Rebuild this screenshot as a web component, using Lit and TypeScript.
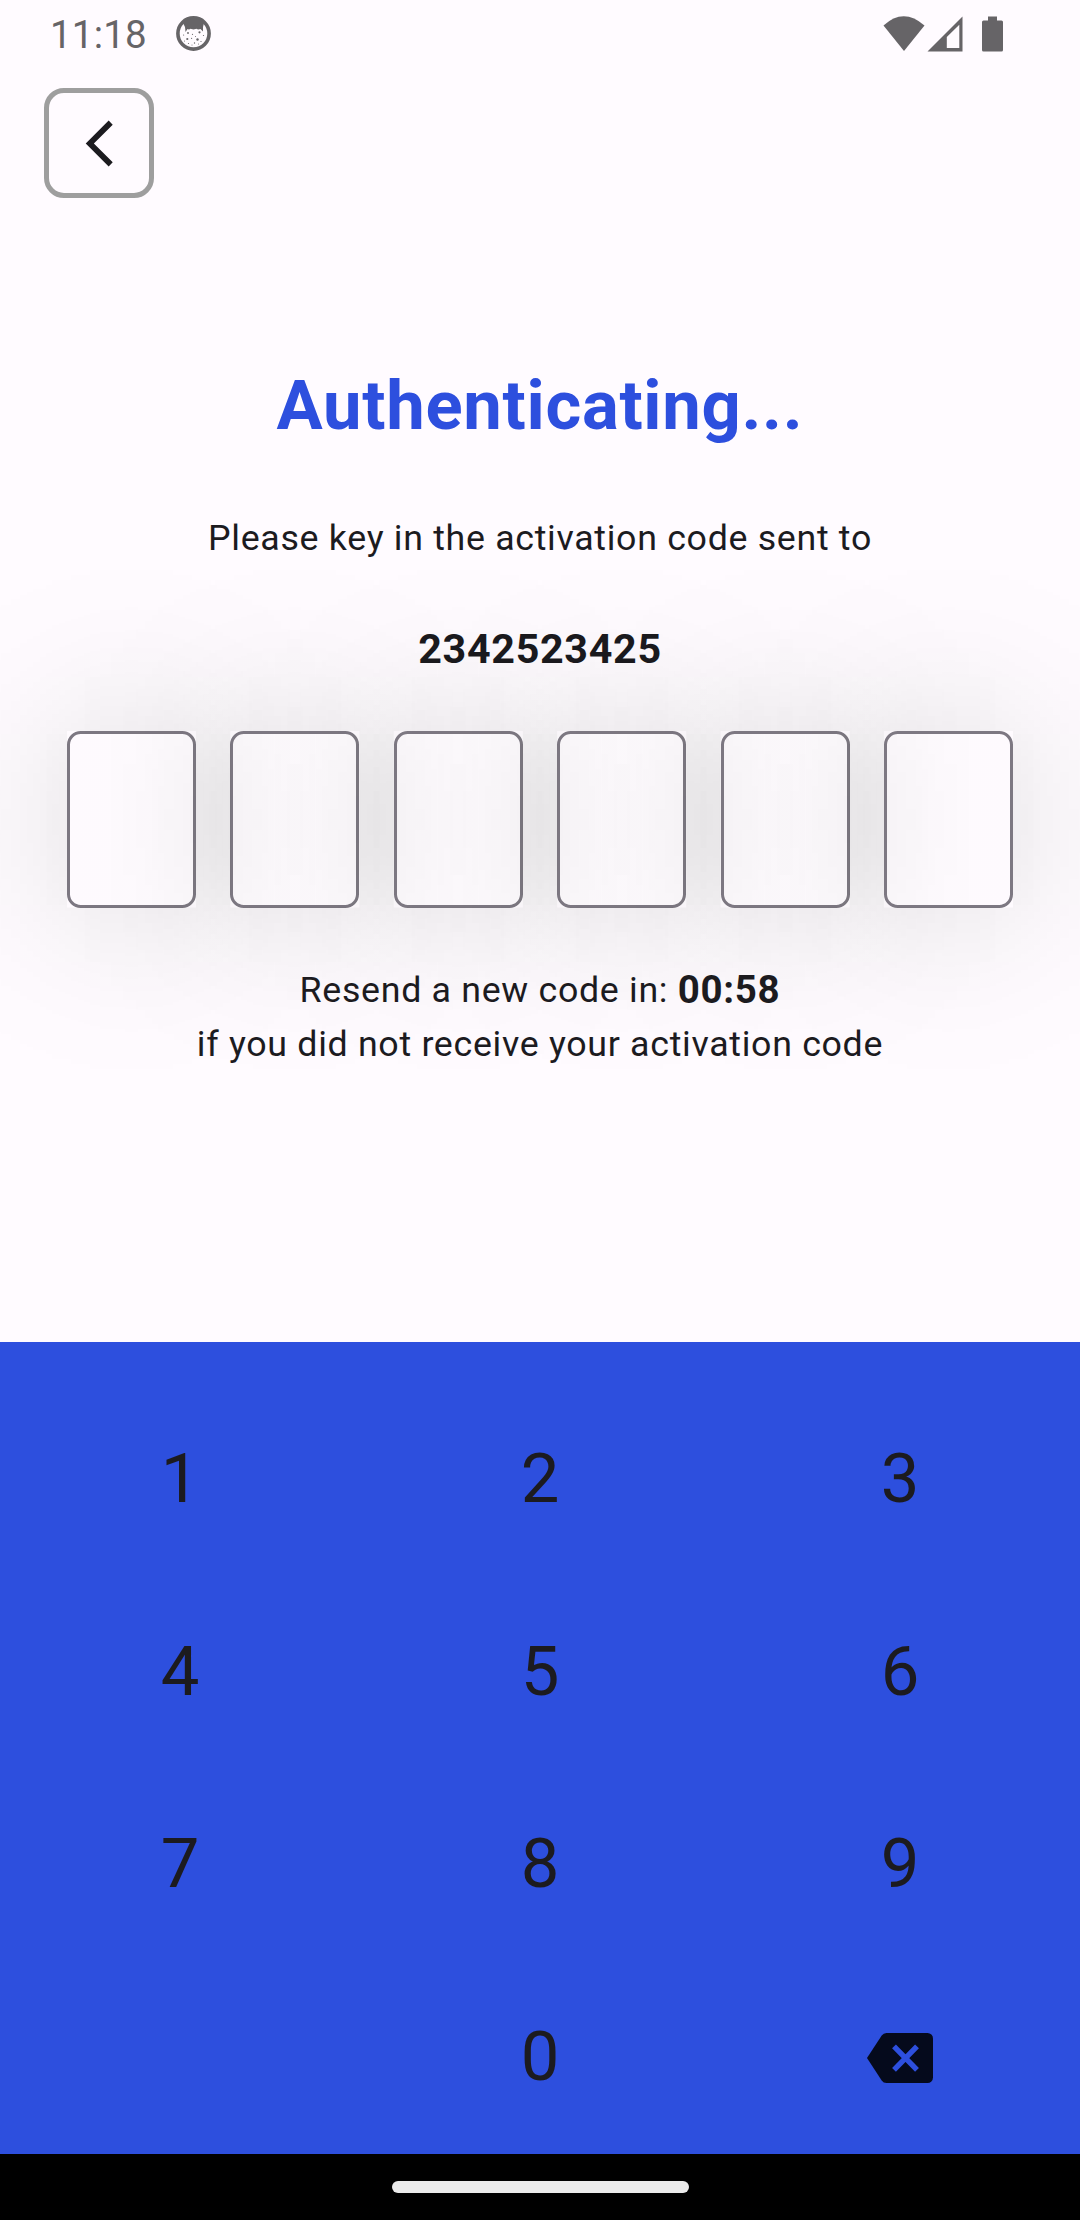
import { LitElement, html, css, svg, unsafeCSS } from "lit";
import { customElement } from "lit/decorators.js";

const DIGITS = ["1", "2", "3", "4", "5", "6", "7", "8", "9", "", "0"];

const CELL_W = 129;
const CELL_H = 176.5;
const SIGMA = 80;
const SPREAD = 240;

// Cumulative normal distribution (logistic-polynomial approximation).
const phi = (x: number) => 1 / (1 + Math.exp(-(1.5976 * x + 0.07056 * x ** 3)));

// Gradient stops for a box edge-to-edge profile softened by a gaussian.
function softStops(size: number, rgb: string, strength: number): string {
  const steps = 48;
  const total = size + SPREAD * 2;
  return Array.from({ length: steps + 1 }, (_, i) => {
    const t = (i / steps) * total - SPREAD;
    const a = (phi(t / SIGMA) - phi((t - size) / SIGMA)) * strength;
    return `rgba(${rgb}, ${a.toFixed(4)}) ${((i / steps) * 100).toFixed(2)}%`;
  }).join(", ");
}

const shadowX = unsafeCSS(softStops(CELL_W, "0, 28, 0", 0.16));
const shadowY = unsafeCSS(softStops(CELL_H, "0, 0, 0", 1));
const x1 = SPREAD;
const y1 = SPREAD;
const x2 = SPREAD + CELL_W;
const y2 = SPREAD + CELL_H;
const outside = unsafeCSS(
  `polygon(evenodd, 0 0, 100% 0, 100% 100%, 0 100%, 0 0, ${x1}px ${y1}px, ${x2}px ${y1}px, ${x2}px ${y2}px, ${x1}px ${y2}px, ${x1}px ${y1}px)`
);

@customElement("status-bar")
class StatusBar extends LitElement {
  static styles = css`
    :host {
      display: flex;
      align-items: center;
      height: 66px;
      padding: 0 75px 0 50px;
      color: #666467;
      font-size: 38.5px;
    }
    .clock { line-height: 66px; padding-top: 3px; width: 126px; letter-spacing: 0.2px; }
    .icons { margin-left: auto; display: flex; }
    svg { display: block; margin-top: 1px; }
  `;
  render() {
    const dots = [
      [12, 17, 0.9], [23.5, 16.3, 1.1], [11.3, 23, 1.1], [21.5, 23.5, 1.2], [16.5, 18.3, 0.6],
      [7.6, 19, 0.6], [27.5, 19.5, 0.6], [15.6, 22.3, 0.6], [18.5, 27, 0.7], [12.5, 27.5, 0.6],
      [25, 25.5, 0.6], [8.5, 25, 0.5], [19.5, 20.5, 0.5], [16, 29, 0.5], [22.5, 28, 0.5],
    ];
    return html`
      <span class="clock">11:18</span>
      <svg width="36" height="36" viewBox="0 0 36 36">
        <circle cx="17.5" cy="17.5" r="15.6" fill="none" stroke="currentColor" stroke-width="3.6" />
        <path fill="currentColor" d="M7 7 Q17.5 -2 28 7 L27 11 L27 15.5 L24.5 13 Q22 14 20.5 12.8 L17.5 13.4 L14.5 12.8 Q13 14 11.5 13 L9.5 16 L9 11Z" />
        ${dots.map(([x, y, r]) => svg`<circle cx=${x} cy=${y} r=${r} fill="currentColor" />`)}
      </svg>
      <svg class="icons" width="122" height="38" viewBox="0 0 122 38" fill="currentColor">
        <path d="M0.5 10.5 Q20.5 -8 41.5 10.5 L21 36Z" />
        <path fill-rule="evenodd" d="M79.5 1.5V36.5H44.5ZM76.3 9.7L63.8 22V33H76.3Z" />
        <path d="M105 1.5h9v4h4.5a1.5 1.5 0 0 1 1.5 1.5v28a1.5 1.5 0 0 1-1.5 1.5h-18a1.5 1.5 0 0 1-1.5-1.5V7a1.5 1.5 0 0 1 1.5-1.5h4.5z" />
      </svg>
    `;
  }
}

@customElement("app-root")
class AppRoot extends LitElement {
  static styles = css`
    :host {
      display: flex;
      flex-direction: column;
      height: 2220px;
      background: #fffbff;
      color: #1c1b1f;
      font-family: Roboto, "Liberation Sans", sans-serif;
      overflow: hidden;
    }
    button { font: inherit; color: inherit; background: none; border: 0; padding: 0; margin: 0; }
    svg { display: block; }
    .back {
      box-sizing: border-box;
      width: 110px;
      height: 110px;
      margin: 22px 0 0 44px;
      border: 5.5px solid #9e9e9e;
      border-radius: 20px;
      display: grid;
      place-items: center;
    }
    .content {
      flex: 1;
      display: flex;
      flex-direction: column;
      align-items: center;
      text-align: center;
      white-space: nowrap;
      overflow: hidden;
      position: relative;
    }
    h1 {
      margin: 167px 0 0;
      font-size: 68.75px;
      line-height: 82px;
      font-weight: 700;
      letter-spacing: 0.7px;
      color: #2d4fde;
    }
    .body { font-size: 35.75px; line-height: 54px; letter-spacing: 0.69px; margin: 0; }
    .lead { margin-top: 64px; }
    .phone { margin: 59px 0 0; font-size: 41.25px; line-height: 50px; font-weight: 700; letter-spacing: 0.69px; }
    .code { display: flex; gap: 34.4px; margin: 57px 0 55px; }
    .cell {
      position: relative;
      width: 129px;
      height: 176.5px;
    }
    .cell::before {
      content: "";
      position: absolute;
      inset: -240px;
      pointer-events: none;
      background: linear-gradient(to right, ${shadowX});
      -webkit-mask-image: linear-gradient(to bottom, ${shadowY});
      mask-image: linear-gradient(to bottom, ${shadowY});
      clip-path: ${outside};
    }
    .outline {
      box-sizing: border-box;
      height: 100%;
      border: 3px solid #7d7882;
      border-radius: 13.75px;
    }
    .timer { font-size: 38.5px; font-weight: 700; line-height: 1; vertical-align: -1px; }
    .layer { position: relative; }
    .keypad {
      height: 812px;
      box-sizing: border-box;
      padding-top: 40px;
      background: #2d4fde;
      display: grid;
      grid-template-columns: repeat(3, 360px);
      grid-auto-rows: 192.8px;
    }
    .key { display: grid; place-items: center; font-size: 68.75px; }
    .key svg { margin-top: 3px; }
    .nav { height: 66px; background: #000; display: grid; place-items: center; }
    .home { width: 297px; height: 12px; border-radius: 6px; background: #ebebeb; }
  `;

  render() {
    return html`
      <status-bar></status-bar>
      <button class="back" aria-label="Back">
        <svg width="55" height="55" viewBox="0 0 24 24" fill="#1c1b1f">
          <path d="M17.77 3.77 16 2 6 12l10 10 1.77-1.77L9.54 12z" />
        </svg>
      </button>
      <div class="content">
        <h1>Authenticating...</h1>
        <p class="body lead">Please key in the activation code sent to</p>
        <p class="phone">2342523425</p>
        <div class="code">
          ${Array.from({ length: 6 }, () => html`<div class="cell"><div class="outline"></div></div>`)}
        </div>
        <p class="body layer">Resend a new code in: <span class="timer">00:58</span></p>
        <p class="body layer">if you did not receive your activation code</p>
      </div>
      <div class="keypad">
        ${DIGITS.map((d) => (d ? html`<button class="key">${d}</button>` : html`<span></span>`))}
        <button class="key" aria-label="Delete">
          <svg width="66" height="50" viewBox="0 0 66 50">
            <path fill="#050a1c" d="M19.5 0H60.5a5.5 5.5 0 0 1 5.5 5.5V44.5a5.5 5.5 0 0 1-5.5 5.5H19.5a6 6 0 0 1-4.8-2.6L0 25 14.7 2.6A6 6 0 0 1 19.5 0Z" />
            <path d="M27 13.3 50 36.8M50 13.3 27 36.8" stroke="#2d4fde" stroke-width="5.4" />
          </svg>
        </button>
      </div>
      <div class="nav"><div class="home"></div></div>
    `;
  }
}
